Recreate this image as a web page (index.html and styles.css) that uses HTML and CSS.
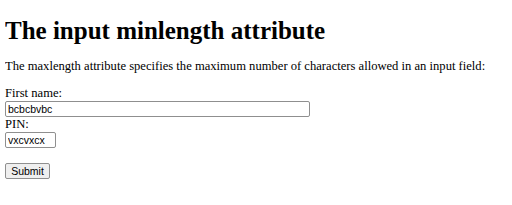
FILE: index.html
```html
<!DOCTYPE html>
<html>
    <head>
        <meta content="text/html;charset=utf-8" http-equiv="Content-Type" />
        <title>minlength</title>
        <link rel="stylesheet" href="styles.css">
    </head>
    <body>
        <h1 class="title">The input minlength attribute</h1>
        <p class="intro">The maxlength attribute specifies the maximum number of characters allowed in an input field:</p>
        <form class="form">
            <label for="fname">First name:</label><br>
            <input type="text" id="fname" name="fname" class="field field-wide" value="bcbcbvbc"><br>
            <label for="pin">PIN:</label><br>
            <input type="text" id="pin" name="pin" class="field field-short" value="vxcvxcx"><br><br>
            <input type="submit" value="Submit" class="submit">
        </form>
    </body>
</html>
```

FILE: styles.css
```css
body {
    margin: 5px;
    font-family: "Liberation Serif", "Times New Roman", serif;
    font-size: 12.6px;
    color: #000;
    background-color: #fff;
}

.title {
    font-size: 25px;
    margin: 12px 0 14px 0;
}

.intro {
    margin: 0 0 12px 0;
}

.field {
    font-family: "Liberation Sans", Arial, sans-serif;
    font-size: 10.5px;
    padding: 1px 2px;
    margin: 0;
    border: 1px solid #8f8f8f;
    border-radius: 2px;
    height: 16px;
    box-sizing: border-box;
}

.field-wide {
    width: 305px;
}

.field-short {
    width: 51px;
}

.submit {
    font-family: "Liberation Sans", Arial, sans-serif;
    font-size: 10.5px;
    margin: 0;
    padding: 1px 5px;
    height: 16px;
    width: 45px;
    border: 1px solid #8f8f8f;
    border-radius: 2px;
    background-color: #efefef;
}
```
